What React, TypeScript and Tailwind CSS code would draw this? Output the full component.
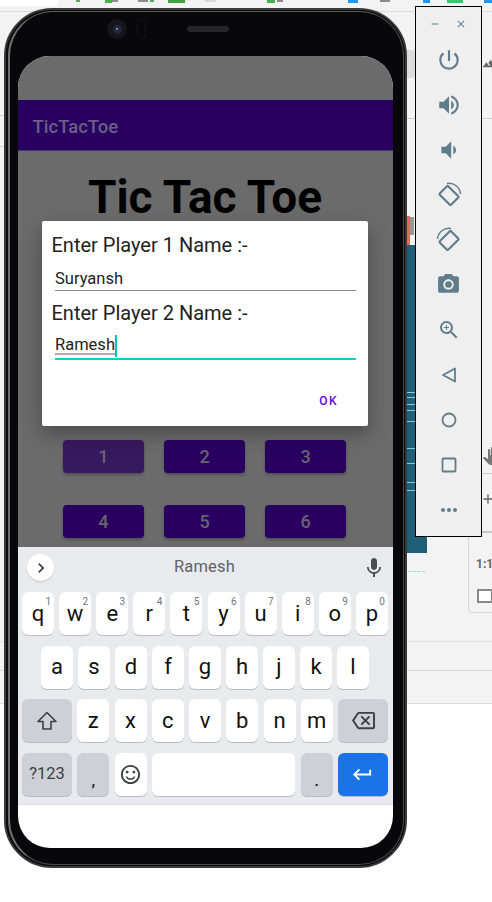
import React from "react";
import {
  MdPowerSettingsNew,
  MdVolumeUp,
  MdVolumeDown,
  MdPhotoCamera,
  MdZoomIn,
  MdMoreHoriz,
  MdMic,
  MdOutlineBackspace,
  MdKeyboardReturn,
  MdOutlineSentimentSatisfied,
  MdChevronRight,
  MdClose,
  MdRemove,
  MdPanTool,
  MdAdd,
  MdLandscape,
} from "react-icons/md";

const font = { fontFamily: "Roboto, sans-serif" };

function RotateIcon({ flip }: { flip?: boolean }) {
  return (
    <svg width="26" height="26" viewBox="0 0 26 26" fill="none" stroke="#607d8b" strokeWidth="2.2" style={flip ? { transform: "scaleX(-1)" } : undefined}>
      <rect x="7" y="5.5" width="12" height="16" rx="1.2" transform="rotate(-45 13 13.5)" />
      <path d="M11 1.5A11.5 11.5 0 0 1 24.5 12" strokeWidth="1.5" />
    </svg>
  );
}

function SideButton({ children }: { children: React.ReactNode }) {
  return <div className="h-[45px] flex items-center justify-center text-[#607d8b]">{children}</div>;
}

function SidePanel() {
  return (
    <div className="absolute left-[415px] top-[6px] w-[67px] h-[531px] bg-[#efefef] border border-black flex flex-col">
      <div className="h-[30px] flex items-center justify-between pl-[13px] pr-[14px] pt-[4px] text-[#607d8b]">
        <MdRemove size={12} />
        <MdClose size={12} />
      </div>
      <div className="flex flex-col">
        <SideButton><MdPowerSettingsNew size={26} /></SideButton>
        <SideButton><MdVolumeUp size={26} /></SideButton>
        <SideButton><MdVolumeDown size={26} /></SideButton>
        <SideButton><RotateIcon /></SideButton>
        <SideButton><RotateIcon flip /></SideButton>
        <SideButton><MdPhotoCamera size={25} /></SideButton>
        <SideButton><MdZoomIn size={24} /></SideButton>
        <SideButton>
          <svg width="18" height="18" viewBox="0 0 18 18" fill="none" stroke="#607d8b" strokeWidth="1.8"><path d="M15 2.5V15.5L3 9Z" strokeLinejoin="round" /></svg>
        </SideButton>
        <SideButton>
          <svg width="18" height="18" viewBox="0 0 18 18" fill="none" stroke="#607d8b" strokeWidth="1.8"><circle cx="9" cy="9" r="6.5" /></svg>
        </SideButton>
        <SideButton>
          <svg width="18" height="18" viewBox="0 0 18 18" fill="none" stroke="#607d8b" strokeWidth="1.8"><rect x="2.5" y="2.5" width="13" height="13" rx="0.8" /></svg>
        </SideButton>
        <SideButton><MdMoreHoriz size={24} /></SideButton>
      </div>
    </div>
  );
}

function Desktop() {
  const bits: [number, number, number, string][] = [
    [76, 4, 2, "#5aa85a"], [105, 7, 3, "#4caf50"], [112, 6, 2, "#8a8a8a"], [138, 10, 2, "#8a8a8a"], [150, 4, 2, "#4caf50"],
    [168, 17, 3, "#43a047"], [205, 11, 2, "#d8d8d8"], [267, 8, 3, "#4caf50"], [277, 6, 2, "#8a8a8a"], [348, 10, 3, "#2196f3"],
    [380, 10, 2, "#8a8a8a"], [423, 7, 3, "#2196f3"], [447, 16, 3, "#2ecc71"], [484, 8, 3, "#2196f3"],
  ];
  return (
    <div className="absolute inset-0">
      <div className="absolute left-0 top-0 w-full h-[704px] bg-[#f3f3f3] border-b border-[#dcdcdc]" />
      <div className="absolute left-0 top-0 w-[58px] h-[6px] bg-white" />
      <div className="absolute left-0 top-[11px] w-full h-px bg-[#dcdcdc]" />
      {bits.map(([x, w, h, c]) => (
        <div key={x} className="absolute top-0" style={{ left: x, width: w, height: h, background: c }} />
      ))}
      <div className="absolute left-0 top-[115px] w-[4px] h-px bg-[#d4d4d4]" />
      <div className="absolute left-0 top-[146px] w-[4px] h-px bg-[#d4d4d4]" />
      <div className="absolute left-0 top-[641px] w-full h-px bg-[#e0e0e0]" />
      <div className="absolute left-0 top-[670px] w-full h-px bg-[#d8d8d8]" />
      <div className="absolute left-[406px] top-[118px] w-full h-[1px] bg-[#cfcfcf]" />
      <div className="absolute left-[407px] top-[50px] w-[8px] h-[28px] bg-[#dddddd] rounded-r-[3px]" />
      <MdLandscape size={15} className="absolute left-[482px] top-[56px] text-[#666]" />
      <div className="absolute left-[407px] top-[216px] w-[3px] h-[54px] bg-[#d9705a]" />
      <div className="absolute left-[410px] top-[217px] w-[4px] h-[18px] bg-[#999]" />
      <div className="absolute left-[407px] top-[245px] w-[20px] h-[308px] bg-[#1f5f78] overflow-hidden">
        {[392, 397, 404, 410, 421, 448, 463, 482, 490].map((y) => (
          <div key={y} className="absolute left-0 w-full h-px bg-[#7fd0e4]" style={{ top: y - 245 }} />
        ))}
      </div>
      <div className="absolute left-[408px] top-[571px] w-[17px] border-t border-dashed border-[#8fd8ea]" />
      <MdPanTool size={18} className="absolute left-[482px] top-[447px] text-[#777]" />
      <div className="absolute left-[482px] top-[473px] w-[10px] h-px bg-[#ccc]" />
      <MdAdd size={16} className="absolute left-[480px] top-[491px] text-[#666]" />
      <div className="absolute left-[468px] top-[531px] w-[40px] h-[82px] border border-[#d8d8d8] rounded-[4px]" />
      <div className="absolute left-[482px] top-[531px] w-[10px] h-[2px] bg-[#c8c8c8]" />
      <div className="absolute left-[476px] top-[555px] text-[12px] font-bold text-[#666]" style={font}>1:1</div>
      <div className="absolute left-[477px] top-[589px] w-[16px] h-[14px] border-2 border-[#888] bg-white" />
    </div>
  );
}

function PhoneTop() {
  return (
    <div className="h-[44px] flex items-center pl-[89px] pb-[10px] shrink-0">
      <div className="w-[20px] h-[20px] rounded-full bg-[#16161a] flex items-center justify-center">
        <div className="w-[9px] h-[9px] rounded-full bg-[#22283f] flex items-center justify-center">
          <div className="w-[2px] h-[2px] rounded-full bg-[#9aa]" />
        </div>
      </div>
      <div className="w-[9px] h-[20px] ml-[10px] rounded-full border border-[#141417]" />
      <div className="w-[42px] h-[6px] ml-[41px] rounded-full bg-[#26262a]" />
    </div>
  );
}

function Btn({ n, light }: { n: string; light?: boolean }) {
  return (
    <div className={`h-[33px] rounded-[4px] flex items-center justify-center text-[18px] font-medium text-[#68636f] shadow-[0_2px_3px_rgba(0,0,0,0.25)] ${light ? "bg-[#38185f]" : "bg-[#290061]"}`}>
      {n}
    </div>
  );
}

function Key({ c, sup }: { c: string; sup?: string }) {
  return (
    <div className="relative w-[32px] h-[43px] rounded-[6px] bg-white shadow-[0_1px_0_#b9bcc2] flex items-center justify-center text-[22px] leading-none text-[#111]">
      {c}
      {sup && <span className="absolute right-[3px] top-[3px] text-[10px] leading-[14px] text-[#70757a]">{sup}</span>}
    </div>
  );
}

function FnKey({ w, children, className }: { w: string; children: React.ReactNode; className?: string }) {
  return (
    <div className={`${w} h-[43px] rounded-[6px] shadow-[0_1px_0_#b9bcc2] flex items-center justify-center text-[#3c4043] ${className ?? "bg-[#cdd0d6]"}`}>
      {children}
    </div>
  );
}

function Keyboard() {
  const r1 = "qwertyuiop".split("");
  const r2 = "asdfghjkl".split("");
  const r3 = "zxcvbnm".split("");
  return (
    <div className="h-[258px] shrink-0 bg-[#e8eaed] border-b border-[#dcdde0] flex flex-col">
      <div className="h-[45px] flex items-center justify-between pl-[9px] pr-[7px] pb-[4px] shrink-0">
        <div className="w-[27px] h-[27px] rounded-full bg-white shadow-[0_1px_1px_#c4c6ca] flex items-center justify-center text-[#3c4043]">
          <MdChevronRight size={20} />
        </div>
        <div className="text-[16.5px] tracking-[0.2px] text-[#5f6368] -ml-[7px]">Ramesh</div>
        <MdMic size={24} className="text-[#4a4d52]" />
      </div>
      <div className="pl-[4px] pr-[5px] flex flex-col gap-[10.7px]">
        <div className="flex justify-between">
          {r1.map((c, i) => <Key key={c} c={c} sup={String((i + 1) % 10)} />)}
        </div>
        <div className="flex justify-between px-[19px]">
          {r2.map((c) => <Key key={c} c={c} />)}
        </div>
        <div className="flex justify-between">
          <FnKey w="w-[50px]">
            <svg width="22" height="22" viewBox="0 0 22 22" fill="none" stroke="#3c4043" strokeWidth="1.6" strokeLinejoin="round"><path d="M11 2.5L2 11.5H7V19H15V11.5H20Z" /></svg>
          </FnKey>
          {r3.map((c) => <Key key={c} c={c} />)}
          <FnKey w="w-[50px]"><MdOutlineBackspace size={23} /></FnKey>
        </div>
        <div className="flex justify-between">
          <FnKey w="w-[50px]"><span className="text-[16.5px] text-[#3c4043]">?123</span></FnKey>
          <FnKey w="w-[32px]"><span className="text-[15px] font-bold text-[#222] pt-[13px]">,</span></FnKey>
          <div className="w-[32px] h-[43px] rounded-[6px] bg-white shadow-[0_1px_0_#b9bcc2] flex items-center justify-center text-[#3c4043]">
            <MdOutlineSentimentSatisfied size={23} />
          </div>
          <div className="w-[143px] h-[43px] rounded-[6px] bg-white shadow-[0_1px_0_#b9bcc2]" />
          <FnKey w="w-[32px]"><span className="text-[15px] font-bold text-[#222] pt-[13px]">.</span></FnKey>
          <FnKey w="w-[50px]" className="bg-[#1a73e8]"><MdKeyboardReturn size={23} className="text-white" /></FnKey>
        </div>
      </div>
    </div>
  );
}

function Dialog() {
  return (
    <div className="absolute left-[24px] top-[165px] w-[326px] h-[205px] bg-white rounded-[2px] shadow-[0_8px_20px_rgba(0,0,0,0.3)] pl-[9.5px] pr-[12px] flex flex-col">
      <div className="h-[47px] flex items-center text-[20px] text-[#222] pt-[1px]">Enter Player 1 Name :-</div>
      <div className="ml-[3.5px] h-[23px] flex items-center text-[16.5px] text-[#222] border-b border-[#8a8a8a]">Suryansh</div>
      <div className="h-[44px] flex items-center text-[20px] text-[#222]">Enter Player 2 Name :-</div>
      <div className="ml-[3.5px] h-[25px] pb-[2px] flex items-center text-[16.5px] text-[#222] border-b-2 border-[#00d2c4]">
        <span className="border-b-2 border-[#aaaaaa] leading-[16px]">Ramesh</span>
        <span className="w-[2px] h-[22px] bg-[#00c4b4]" />
      </div>
      <div className="flex justify-end pr-[18px] pt-[32px]">
        <span className="text-[12px] font-medium tracking-[1.4px] text-[#6200ee]">OK</span>
      </div>
    </div>
  );
}

function Screen() {
  return (
    <div className="relative w-[375px] h-[792px] rounded-[32px] bg-white overflow-hidden flex flex-col" style={font}>
      <div className="h-[44px] bg-[#6b6b6b] shrink-0" />
      <div className="h-[51px] bg-[#290061] shrink-0 flex items-center pl-[14.5px] pt-[6px] text-[18.5px] font-medium text-[#6a5f86] border-b border-[#4a3a6c]">TicTacToe</div>
      <div className="h-[396px] shrink-0 bg-[#6b6b6b] overflow-hidden">
        <div className="h-[92px] flex items-center justify-center text-[46px] font-bold text-black pr-[1px]">Tic Tac Toe</div>
        <div className="ml-[45px] w-[283px] mt-[197px] grid grid-cols-3 gap-x-[20.5px] gap-y-[32px]">
          <Btn n="1" light />
          <Btn n="2" />
          <Btn n="3" />
          <Btn n="4" />
          <Btn n="5" />
          <Btn n="6" />
        </div>
      </div>
      <Keyboard />
      <Dialog />
    </div>
  );
}

export default function App() {
  return (
    <div className="relative w-[492px] h-[902px] overflow-hidden bg-white">
      <Desktop />
      <div className="relative pt-[8px] pl-[4px]">
        <div className="w-[403px] h-[860px] rounded-[48px] border-2 border-[#3a3a3a] bg-[#0a0a0a]">
          <div className="w-full h-full rounded-[46px] border border-l-2 border-[#0c0c0c]">
            <div className="w-full h-full rounded-[45px] bg-[#08080a] border border-l-2 border-[#4a4a4a] border-l-[#707070] border-t-[#5a5a5a] pl-[8px] pr-[10px] pb-[16px] flex flex-col">
              <PhoneTop />
              <Screen />
            </div>
          </div>
        </div>
      </div>
      <SidePanel />
    </div>
  );
}
